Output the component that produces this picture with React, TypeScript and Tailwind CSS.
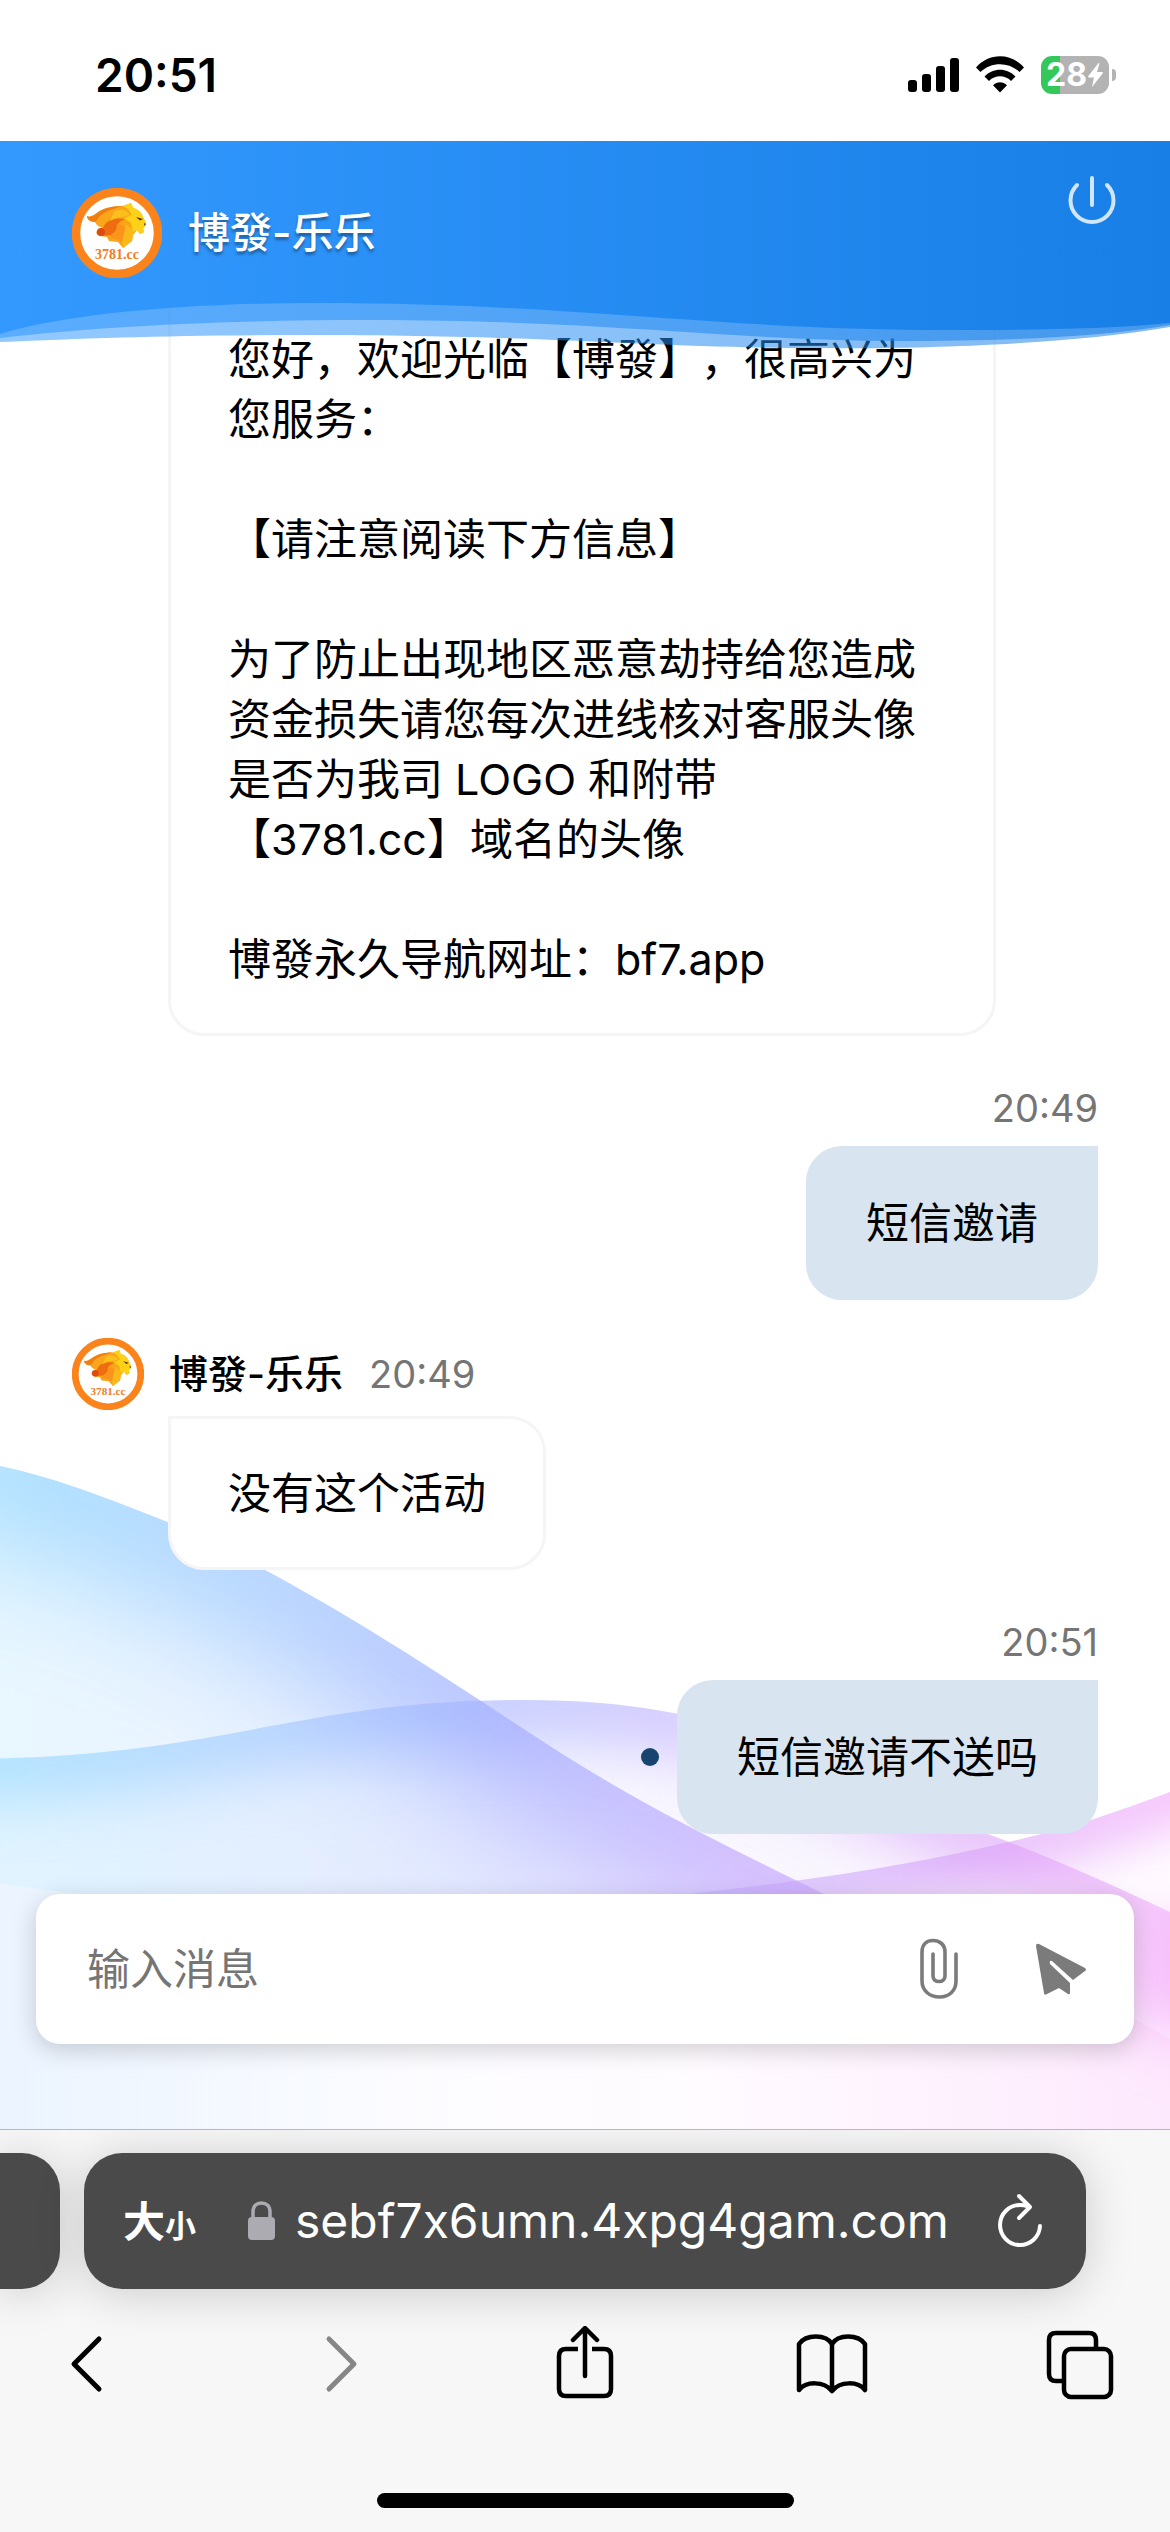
import React from 'react'

interface AvatarProps {
  className: string
}

interface UserMessageProps {
  time: string
  pending?: boolean
  children: React.ReactNode
}

const Avatar: React.FC<AvatarProps> = ({ className }) => (
  <svg viewBox="0 0 90 90" className={className} role="img" aria-label="3781.cc">
    <circle cx="45" cy="45" r="41" fill="#fff" stroke="#fb831b" strokeWidth="8.5" />
    <path d="M15 28C18 30 22 27 25 25C30 21 38 18 51 18L59 15 61 20C66 21 70 25 71 29L74 35 73 38 71 40 72 44 68 46 65 42 61 47 60 53 51 60 46 54 37 53 35 49 28 48C24 47 23 43 27 41L31 40C27 39 24 37 23 34C18 34 15 31 15 28Z" fill="#f9a51a" />
    <path d="M15 28C18 30 22 27 25 25C30 21 38 18 51 18C41 20 34 25 30 31C27 31 25 33 23 34C18 34 15 31 15 28Z" fill="#f07f12" />
    <path d="M24 34C27 26 38 20 52 20C44 23 38 27 36 33L29 38Z" fill="#fba51a" />
    <path d="M31 40C34 32 42 29 53 31C46 34 44 37 45 42L39 47 29 48C23 46 23 42 31 40Z" fill="#ee6d10" />
    <path d="M51 18L59 15 61 20C66 21 70 25 71 29L74 35 73 38 71 40 72 44 68 46 65 42 61 44 59 35 52 30 60 27 56 21Z" fill="#fcd116" />
    <path d="M42 24C49 20 54 22 58 27L50 29C45 29 42 31 38 33Z" fill="#fcc01c" />
    <path d="M45 36C51 36 55 40 53 46L50 55 45 51 37 50C42 46 45 42 45 36Z" fill="#fb941c" />
    <path d="M54 36L61 42 61 47 60 53 51 60 50 54Z" fill="#fbb81a" />
    <path d="M64 29L71 31 68 32.500Z" fill="#4a3310" />
    <path d="M72 35L74 36 72.500 38Z" fill="#5a3a10" />
    <circle cx="29" cy="44" r="4" fill="#dd4b0f" />
    <text x="45" y="71" textAnchor="middle" fontSize="14" fontWeight="700" fontFamily="Liberation Serif, serif" fill="#f47b20">
      3781.cc
    </text>
  </svg>
)

const StatusBar: React.FC = () => (
  <div className="flex h-[141px] items-center justify-between bg-white pr-[54px] pl-[95px]">
    <time className="pt-2 text-[46px] leading-[56px] font-semibold">20:51</time>
    <div className="flex items-center gap-[17px] pt-2">
      <svg className="h-[36px] w-[51px]" viewBox="0 0 51 36">
        <rect x="0" y="23" width="9" height="12" rx="3" />
        <rect x="14" y="17" width="9" height="18" rx="3" />
        <rect x="28" y="9" width="9" height="26" rx="3" />
        <rect x="42" y="1" width="9" height="34" rx="3" />
      </svg>
      <svg className="h-[38px] w-[48px]" viewBox="0 0 48 38">
        <path d="M0 11.500C13-3.500 35-3.500 48 11.500L43.500 16C33 5.500 15 5.500 4.500 16Z" />
        <path d="M8.500 20.500C17 11.500 31 11.500 39.500 20.500L35 25C29 18.800 19 18.800 13 25Z" />
        <path d="M17 29.300C21 25.300 27 25.300 31 29.300L24 36.500Z" />
      </svg>
      <div className="flex items-center gap-[3px]">
        <div className="flex h-[38px] w-[68px] items-center justify-center rounded-[11px] bg-[linear-gradient(to_right,#34c759_28%,#b3b3b3_28%)] text-[32px] leading-[38px] font-bold text-white">
          28
          <svg className="h-[26px] w-[17px]" viewBox="0 0 17 26" fill="#fff">
            <path d="M11.500 1 1 14.500 1.500 15.500H7L5 25 16 11 15.500 10H10L12.500 1.500Z" />
          </svg>
        </div>
        <div className="h-3 w-1 rounded-r-full bg-[#b3b3b3]" />
      </div>
    </div>
  </div>
)

const Header: React.FC = () => (
  <header className="relative z-10 flex items-center bg-[linear-gradient(to_right,#3399ff,#187fe6)] px-[72px] pt-[47px] pb-[25px]">
    <Avatar className="h-[90px] w-[90px]" />
    <h1 className="ml-[26px] text-[42px] leading-[60px] font-medium text-white [text-shadow:0_3px_3px_rgba(0,0,0,0.35)]">
      博發-乐乐
    </h1>
    <button aria-label="结束对话" className="absolute top-[33px] right-[53px]">
      <svg className="h-[50px] w-[50px]" viewBox="0 0 50 50" fill="none" stroke="#fff" strokeOpacity="0.8" strokeWidth="4" strokeLinecap="round">
        <path d="M25 4V31" />
        <path d="M10 11A21.500 21.500 0 1 0 40 11" />
      </svg>
    </button>
    <svg className="pointer-events-none absolute top-full left-0 h-12 w-full" viewBox="0 0 1170 48" preserveAspectRatio="none" fill="url(#header)">
      <defs>
        <linearGradient id="header">
          <stop offset="0" stopColor="#3399ff" />
          <stop offset="1" stopColor="#187fe6" />
        </linearGradient>
      </defs>
      <path opacity="0.54" d="M0 0H1170V24C1060 43 900 46 820 45C650 45 560 32 300 32C180 32 90 35 0 39Z" />
      <path opacity="0.58" d="M0 0H1170V22C1090 36 980 38 900 38C740 38 600 17 370 17C220 17 90 24 0 35Z" />
      <path d="M0 0H1170V20C1100 27 1010 27 940 27C720 27 570 0 320 0C190 0 70 10 0 31Z" />
    </svg>
  </header>
)

const edgeA = 'M-80 58C0 60 60 80 165 122C340 200 480 305 590 372S800 480 900 535'
const edgeB = 'M-80 360C220 364 280 302 520 301S830 380 985 434Q1090 472 1250 552'
const edgeC = 'M640 500C860 478 960 455 1050 433Q1110 418 1250 362'

const Backdrop: React.FC = () => (
  <svg className="pointer-events-none absolute bottom-0 left-0 h-[730px] w-full" viewBox="0 0 1170 730" preserveAspectRatio="none" aria-hidden="true">
    <defs>
      <linearGradient id="hue" gradientUnits="userSpaceOnUse" x1="0" x2="1170">
        <stop offset="0" stopColor="#8fd6ff" />
        <stop offset="0.25" stopColor="#9cc4ff" />
        <stop offset="0.42" stopColor="#a0aeff" />
        <stop offset="0.62" stopColor="#c2aaff" />
        <stop offset="0.82" stopColor="#d69cf8" />
        <stop offset="1" stopColor="#f0a4fb" />
      </linearGradient>
      <linearGradient id="base">
        <stop offset="0" stopColor="#ebf4ff" />
        <stop offset="0.35" stopColor="#fcfcff" />
        <stop offset="0.6" stopColor="#fffbff" />
        <stop offset="1" stopColor="#fde9fd" />
      </linearGradient>
      <filter id="soft" filterUnits="userSpaceOnUse" x="-300" y="-200" width="1800" height="1100">
        <feGaussianBlur stdDeviation="30" />
      </filter>
      <filter id="softer" filterUnits="userSpaceOnUse" x="-300" y="-200" width="1800" height="1100">
        <feGaussianBlur stdDeviation="60" />
      </filter>
      <clipPath id="clipA"><path d={`${edgeA}V600H-80Z`} /></clipPath>
      <clipPath id="clipB"><path d={`${edgeB}V640H-80Z`} /></clipPath>
      <clipPath id="clipC"><path d={`${edgeC}V640H640Z`} /></clipPath>
    </defs>
    <g clipPath="url(#clipA)">
      <rect width="1170" height="600" fill="url(#hue)" opacity="0.2" />
      <path d={edgeA} fill="none" stroke="url(#hue)" strokeWidth="150" filter="url(#softer)" opacity="0.75" />
    </g>
    <g clipPath="url(#clipB)">
      <rect width="1170" height="640" fill="url(#hue)" opacity="0.1" />
      <path d={edgeB} fill="none" stroke="url(#hue)" strokeWidth="80" filter="url(#soft)" opacity="0.6" />
    </g>
    <g clipPath="url(#clipC)">
      <path d={edgeC} fill="none" stroke="url(#hue)" strokeWidth="60" filter="url(#soft)" opacity="0.8" />
    </g>
    <path d="M0 484Q80 498 200 504L1100 600L1170 640V730H0Z" fill="url(#base)" />
    <ellipse cx="1180" cy="580" rx="70" ry="60" fill="#f6aefb" opacity="0.7" filter="url(#soft)" />
  </svg>
)

const AgentBubble: React.FC<{ children: React.ReactNode }> = ({ children }) => (
  <div className="ml-24 w-fit max-w-[828px] rounded-[36px] rounded-tl-none border-[3px] border-[#f5f5f5] bg-white px-[57px] py-11 text-[43px] leading-[60px] whitespace-pre-line [text-spacing-trim:space-all]">
    {children}
  </div>
)

const UserMessage: React.FC<UserMessageProps> = ({ time, pending, children }) => (
  <div className="mt-12 flex flex-col items-end gap-[14px]">
    <time className="text-[38px] leading-[48px] text-[#757575]">{time}</time>
    <div className="flex items-center gap-[18px]">
      {pending && <span className="h-[18px] w-[18px] rounded-full bg-[#17456f]" />}
      <div className="rounded-[36px] rounded-tr-none border-[3px] border-[#d8e4f0] bg-[#d8e4f0] px-[57px] py-11 text-[43px] leading-[60px]">
        {children}
      </div>
    </div>
  </div>
)

const Composer: React.FC = () => (
  <form
    className="relative mx-9 mt-auto mb-[85px] flex h-[150px] items-center rounded-3xl bg-white pr-[46px] pl-[51px] shadow-[0_6px_24px_rgba(0,0,0,0.18)]"
    onSubmit={(event) => event.preventDefault()}
  >
    <input
      aria-label="输入消息"
      placeholder="输入消息"
      type="text"
      className="min-w-0 flex-1 text-[43px] leading-[60px] outline-none placeholder:text-[#757575]"
    />
    <button aria-label="附件" type="button">
      <svg className="h-[62px] w-[40px]" viewBox="0 0 40 62" fill="none" stroke="#7b7b7b" strokeWidth="3.600" strokeLinecap="round">
        <path d="M37 16V43C37 53 30 59 20.500 59S3 53 3 43V14C3 6 8 2.500 14 2.500S26 6 26 14V38C26 41.500 23.500 43.500 20 43.500S14 41.500 14 38V16" />
      </svg>
    </button>
    <button aria-label="发送" className="ml-[75px]">
      <svg className="h-[54px] w-[54px]" viewBox="0 0 54 54">
        <path d="M2 4Q2 1 5 2L51 26Q53 28 51 29L39 38 18 19Q15 18 16 22L36 41V51Q36 53 34 52L25 46 13 52Q10 54 10 51Z" fill="#7b7b7b" />
      </svg>
    </button>
  </form>
)

const BrowserBar: React.FC = () => (
  <footer className="overflow-hidden border-t border-[#b8b8bc] bg-[#f7f7f7] pt-[23px] pb-6">
    <div className="flex pr-[84px]">
      <div className="h-[136px] w-[60px] rounded-r-[38px] bg-[#4a4a4a] shadow-[0_4px_48px_rgba(0,0,0,0.18)]" />
      <div className="ml-6 flex h-[136px] flex-1 items-center rounded-[38px] bg-[#4a4a4a] pr-[42px] pl-[39px] text-white shadow-[0_4px_48px_rgba(0,0,0,0.18)]">
        <button aria-label="页面设置" className="flex items-baseline font-bold">
          <span className="text-[42px]">大</span>
          <span className="text-[31px]">小</span>
        </button>
        <svg className="ml-[52px] h-10 w-[27px]" viewBox="0 0 27 40">
          <rect x="0" y="16" width="27" height="23" rx="4" fill="#acabb1" />
          <path d="M5 17V11C5 5 8.500 2 13.500 2S22 5 22 11V17" fill="none" stroke="#acabb1" strokeWidth="3.500" />
        </svg>
        <a href="https://sebf7x6umn.4xpg4gam.com" className="ml-5 text-[48px] leading-[60px] [font-feature-settings:'calt'_0]">
          sebf7x6umn.4xpg4gam.com
        </a>
        <button aria-label="刷新" className="ml-auto">
          <svg className="h-[58px] w-[48px]" viewBox="0 0 48 58" fill="none" stroke="#fff" strokeWidth="4" strokeLinecap="round" strokeLinejoin="round">
            <path d="M31 14Q28 13 24 13A20 20 0 1 0 44 34" />
            <path d="M23 4 34 15 23 26" />
          </svg>
        </button>
      </div>
    </div>
    <nav className="mt-[37px] flex justify-between pr-[54px] pl-[50px]">
      <button aria-label="后退">
        <svg className="h-[76px] w-[72px]" viewBox="0 0 72 76" fill="none" stroke="#000" strokeWidth="5" strokeLinecap="round" strokeLinejoin="round">
          <path d="M49 13 24 38 49 63" />
        </svg>
      </button>
      <button aria-label="前进" disabled>
        <svg className="h-[76px] w-[72px]" viewBox="0 0 72 76" fill="none" stroke="#868686" strokeWidth="5" strokeLinecap="round" strokeLinejoin="round">
          <path d="M30 13 55 38 30 63" />
        </svg>
      </button>
      <button aria-label="分享">
        <svg className="h-[76px] w-[72px]" viewBox="0 0 72 76" fill="none" stroke="#000" strokeWidth="4.500" strokeLinecap="round" strokeLinejoin="round">
          <path d="M38 50V3M26 14 38 2 50 14" />
          <path strokeLinecap="butt" d="M31 23H19Q12 23 12 30V63Q12 70 19 70H57Q64 70 64 63V30Q64 23 57 23H45" />
        </svg>
      </button>
      <button aria-label="书签">
        <svg className="h-[76px] w-[72px]" viewBox="0 0 72 76" fill="none" stroke="#000" strokeWidth="4.500" strokeLinecap="round" strokeLinejoin="round">
          <path d="M36 18C30 8 10 8 3 18V64C10 55 28 55 36 65 44 55 62 55 69 64V18C62 8 42 8 36 18V65" />
        </svg>
      </button>
      <button aria-label="标签页">
        <svg className="h-[76px] w-[72px]" viewBox="0 0 72 76" fill="none" stroke="#000" strokeWidth="4.500" strokeLinejoin="round">
          <rect x="20" y="23" width="47" height="48" rx="7" />
          <path d="M52 22V14Q52 7 45 7H12Q5 7 5 14V48Q5 55 12 55H19" />
        </svg>
      </button>
    </nav>
    <div className="mx-auto mt-[91px] h-[15px] w-[417px] rounded-full bg-black" />
  </footer>
)

const App: React.FC = () => {
  return (
    <div className="flex min-h-screen flex-col bg-white font-['Inter','Noto_Sans_CJK_SC',sans-serif] text-black">
      <StatusBar />
      <Header />
      <main className="relative flex flex-1 flex-col">
        <Backdrop />
        <section className="relative -mt-[21px] px-[72px]">
          <AgentBubble>
            {'您好，欢迎光临【博發】，很高兴为您服务：\n\n【请注意阅读下方信息】\n\n为了防止出现地区恶意劫持给您造成资金损失请您每次进线核对客服头像是否为我司 LOGO 和附带【3781.cc】域名的头像\n\n博發永久导航网址：bf7.app'}
          </AgentBubble>
          <UserMessage time="20:49">短信邀请</UserMessage>
          <div className="mt-[38px] mb-[6px] flex items-center">
            <Avatar className="h-[72px] w-[72px]" />
            <span className="ml-[25px] text-[39px] leading-[60px] font-medium">博發-乐乐</span>
            <time className="ml-[26px] text-[38px] leading-[48px] text-[#757575]">20:49</time>
          </div>
          <AgentBubble>没有这个活动</AgentBubble>
          <UserMessage time="20:51" pending>
            短信邀请不送吗
          </UserMessage>
        </section>
        <Composer />
      </main>
      <BrowserBar />
    </div>
  )
}

export default App
